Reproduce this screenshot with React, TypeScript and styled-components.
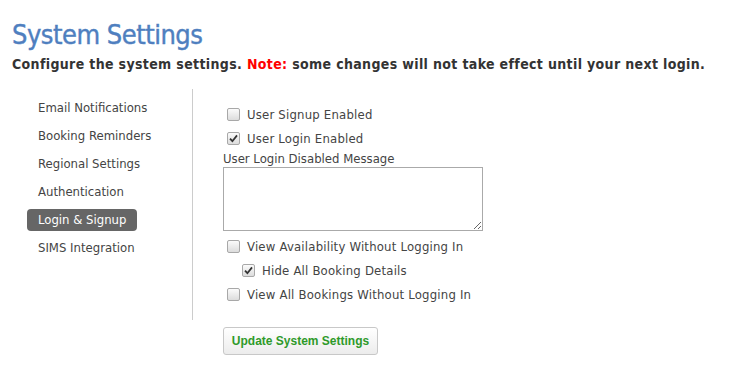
import styled, { createGlobalStyle } from 'styled-components';

const GlobalStyle = createGlobalStyle`
	body {
		margin: 0;
		background: #fff;
		font-family: 'DejaVu Sans Condensed', 'DejaVu Sans', sans-serif;
		color: #444;
	}
`;

const navItems = [
	'Email Notifications',
	'Booking Reminders',
	'Regional Settings',
	'Authentication',
	'Login & Signup',
	'SIMS Integration',
];

const CheckMark = () => (
	<svg width="9" height="9" viewBox="0 0 9 9">
		<path d="M1 4.6 L3.4 7.2 L8 1.4" fill="none" stroke="#333" strokeWidth="1.8" />
	</svg>
);

const CheckRow = ({ label, checked, indent }: { label: string; checked?: boolean; indent?: boolean }) => (
	<Row $indent={indent}>
		<Box>{checked && <CheckMark />}</Box>
		<span>{label}</span>
	</Row>
);

const App = () => {
	return (
		<Page>
			<GlobalStyle />
			<Title>System Settings</Title>
			<Subtitle>
				Configure the system settings. <Note>Note:</Note> some changes will not take effect until your next
				login.
			</Subtitle>

			<Layout>
				<Sidebar>
					{navItems.map((item) => (
						<NavItem key={item} $active={item === 'Login & Signup'}>
							{item}
						</NavItem>
					))}
				</Sidebar>

				<Panel>
					<CheckRow label="User Signup Enabled" />
					<CheckRow label="User Login Enabled" checked />
					<FieldLabel>User Login Disabled Message</FieldLabel>
					<TextArea />
					<CheckRow label="View Availability Without Logging In" />
					<CheckRow label="Hide All Booking Details" checked indent />
					<CheckRow label="View All Bookings Without Logging In" />
				</Panel>

				<Footer>
					<SubmitButton>Update System Settings</SubmitButton>
				</Footer>
			</Layout>
		</Page>
	);
};

const Page = styled.div`
	padding: 17px 0 0 12px;
`;
const Title = styled.h1`
	margin: 0;
	font-size: 27px;
	line-height: 36px;
	font-weight: normal;
	letter-spacing: -0.5px;
	color: #4f7fbf;
	-webkit-text-stroke: 0.4px #4f7fbf;
`;
const Subtitle = styled.p`
	margin: 1px 0 0;
	font-size: 14px;
	line-height: 20px;
	font-weight: bold;
	letter-spacing: 0.35px;
	color: #333;
`;
const Note = styled.span`
	color: #ff0000;
`;
const Layout = styled.div`
	display: grid;
	grid-template-columns: 180px 1fr;
	margin-top: 15px;
`;
const Sidebar = styled.div`
	display: flex;
	flex-direction: column;
	align-items: flex-start;
	gap: 6px;
	padding: 8px 0 0 15px;
`;
const NavItem = styled.div<{ $active?: boolean }>`
	height: 22px;
	line-height: 22px;
	padding: 0 11px;
	border-radius: 4px;
	font-size: 13px;
	color: ${(p) => (p.$active ? '#fff' : '#444')};
	background: ${(p) => (p.$active ? '#666' : 'transparent')};
`;
const Panel = styled.div`
	display: flex;
	flex-direction: column;
	align-items: flex-start;
	border-left: 1px solid #ccc;
	padding: 13px 0 14px 30px;
`;
const Row = styled.label<{ $indent?: boolean }>`
	display: flex;
	align-items: center;
	gap: 7px;
	height: 24px;
	margin-left: ${(p) => (p.$indent ? '19px' : '4px')};
	font-size: 13px;
	letter-spacing: 0.2px;
	color: #444;
`;
const Box = styled.span`
	display: flex;
	align-items: center;
	justify-content: center;
	box-sizing: border-box;
	width: 13px;
	height: 13px;
	border: 1px solid #a8a8a8;
	border-radius: 2px;
	background: linear-gradient(#fbfbfb, #dcdcdc);
`;
const FieldLabel = styled.div`
	font-size: 13px;
	line-height: 17px;
	color: #444;
`;
const TextArea = styled.textarea`
	box-sizing: border-box;
	width: 260px;
	height: 64px;
	margin: 0 0 3px;
	border: 1px solid #aaa;
	resize: both;
`;
const Footer = styled.div`
	grid-column: 2;
	padding: 7px 0 0 31px;
`;
const SubmitButton = styled.button`
	height: 28px;
	width: 155px;
	border: 1px solid #c8c8c8;
	border-radius: 3px;
	background: linear-gradient(#ffffff, #ececec);
	font-family: 'Liberation Sans', Arial, sans-serif;
	font-size: 12px;
	font-weight: bold;
	color: #2e9a2a;
`;

export default App;
